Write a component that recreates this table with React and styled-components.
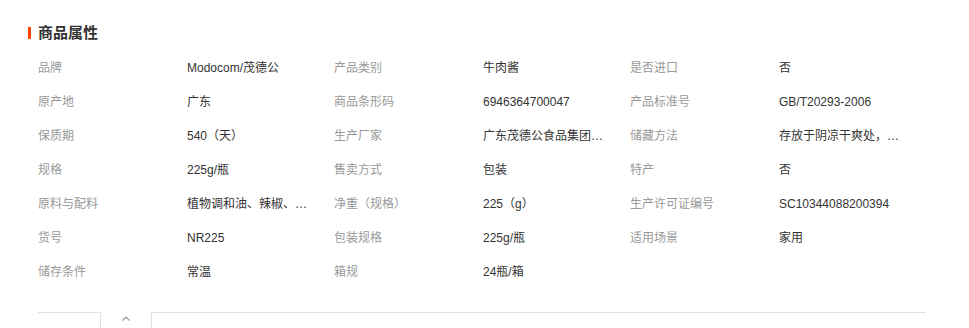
import React from 'react';
import styled, { createGlobalStyle } from 'styled-components';

const GlobalStyle = createGlobalStyle`
  body {
    margin: 0;
    background: #fff;
    font-family: "Liberation Sans", "Noto Sans CJK SC", sans-serif;
  }
`;

const attributes = [
  ['品牌', 'Modocom/茂德公'],
  ['产品类别', '牛肉酱'],
  ['是否进口', '否'],
  ['原产地', '广东'],
  ['商品条形码', '6946364700047'],
  ['产品标准号', 'GB/T20293-2006'],
  ['保质期', '540（天）'],
  ['生产厂家', '广东茂德公食品集团有限公司'],
  ['储藏方法', '存放于阴凉干爽处，避免阳光直射'],
  ['规格', '225g/瓶'],
  ['售卖方式', '包装'],
  ['特产', '否'],
  ['原料与配料', '植物调和油、辣椒、牛肉、食用盐'],
  ['净重（规格）', '225（g）'],
  ['生产许可证编号', 'SC10344088200394'],
  ['货号', 'NR225'],
  ['包装规格', '225g/瓶'],
  ['适用场景', '家用'],
  ['储存条件', '常温'],
  ['箱规', '24瓶/箱'],
];

const Section = styled.section`
  padding: 27px 43px 0 28px;
`;

const Heading = styled.h2`
  margin: 0;
  height: 12px;
  padding-left: 7px;
  border-left: 3px solid #ff4400;
  color: #333;
  font-size: 15px;
  font-weight: bold;
  line-height: 12px;
`;

const AttrGrid = styled.dl`
  display: grid;
  grid-template-columns: repeat(3, 149px 147px);
  margin: 12px 0 0 10px;
`;

const Label = styled.dt`
  height: 34px;
  color: #999;
  font-size: 12px;
  line-height: 34px;
  white-space: nowrap;
`;

const Value = styled.dd`
  margin: 0;
  max-width: 122px;
  height: 34px;
  overflow: hidden;
  color: #333;
  font-size: 12px;
  line-height: 34px;
  white-space: nowrap;
  text-overflow: ellipsis;
`;

const Footer = styled.div`
  display: flex;
  margin: 23px 0 0 10px;
`;

const Rule = styled.div`
  flex: ${({ $grow }) => ($grow ? 1 : '0 0 62px')};
  border-top: 1px solid #e3e3e3;
`;

const Toggle = styled.button`
  display: flex;
  justify-content: center;
  flex: 0 0 52px;
  height: 20px;
  padding: 4px 0 0;
  border: 1px solid #e3e3e3;
  border-top: none;
  background: #fff;
  cursor: pointer;
`;

function Chevron() {
  return (
    <svg width="8" height="5" viewBox="0 0 8 5">
      <polyline points="0.5,4.5 4,1 7.5,4.5" fill="none" stroke="#9a9a9a" strokeWidth="1.2" />
    </svg>
  );
}

function App() {
  return (
    <Section>
      <GlobalStyle />
      <Heading>商品属性</Heading>
      <AttrGrid>
        {attributes.map(([label, value]) => (
          <React.Fragment key={label}>
            <Label>{label}</Label>
            <Value>{value}</Value>
          </React.Fragment>
        ))}
      </AttrGrid>
      <Footer>
        <Rule />
        <Toggle aria-label="收起">
          <Chevron />
        </Toggle>
        <Rule $grow />
      </Footer>
    </Section>
  );
}

export default App;
